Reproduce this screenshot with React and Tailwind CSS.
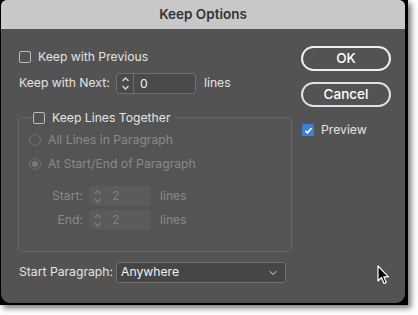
import { ChevronDown } from "lucide-react";

function Stepper({ value, disabled }) {
  return (
    <div
      className={
        disabled
          ? "flex h-[20px] w-[62px] rounded-[3px] bg-[#5b5b5b]"
          : "flex h-[21px] w-[80px] rounded-[3px] border border-[#6e6e6e] bg-[#4a4a4a]"
      }
    >
      <div
        className={
          "flex w-[17px] flex-col items-center justify-center " +
          (disabled ? "text-[#7e7e7e]" : "border-r border-[#6e6e6e] text-[#d8d8d8]")
        }
      >
        <svg width="9" height="15" viewBox="0 0 9 15" fill="none" stroke="currentColor" strokeWidth="1.3">
          <path d="M1.5 5 L4.5 2 L7.5 5" />
          <path d="M1.5 10 L4.5 13 L7.5 10" />
        </svg>
      </div>
      <span
        className={
          "pl-[6px] leading-[20px] " + (disabled ? "text-[#808080]" : "text-[#eeeeee]")
        }
      >
        {value}
      </span>
    </div>
  );
}

function Box({ checked }) {
  if (checked) {
    return (
      <span className="flex h-[12px] w-[12px] items-center justify-center rounded-[2px] bg-[#3b82d6]">
        <svg width="9" height="9" viewBox="0 0 9 9" fill="none" stroke="white" strokeWidth="1.6">
          <path d="M1.5 4.8 L3.6 6.8 L7.5 2" />
        </svg>
      </span>
    );
  }
  return <span className="h-[12px] w-[12px] rounded-[2px] border border-[#bdbdbd]" />;
}

function Radio({ selected }) {
  return (
    <span className="flex h-[12px] w-[12px] items-center justify-center rounded-full border border-[#747474]">
      {selected && <span className="h-[6px] w-[6px] rounded-full bg-[#7a7a7a]" />}
    </span>
  );
}

export default function App() {
  return (
    <div
      className="relative h-[315px] w-[418px] overflow-hidden whitespace-nowrap bg-white text-[12.2px]"
      style={{ fontFamily: "Inter, 'Noto Sans', sans-serif" }}
    >
      <div className="h-[305px] w-[408px] bg-black pb-[2px] pl-[1px] pr-[3px] shadow-[3px_3px_6px_rgba(0,0,0,0.55)]">
        <div className="flex h-full flex-col overflow-hidden rounded-b-[9px] rounded-t-[6px] bg-[#535353]">
          <div className="flex h-[29px] items-center justify-center bg-[#c8c8c8] text-[13.5px] font-semibold text-[#333333]">
            Keep Options
          </div>

          <div className="flex flex-1 pl-[17px] pr-[14px] pt-[17px]">
            <div className="flex w-[274px] flex-col text-[#e4e4e4]">
              <label className="flex h-[22px] items-center gap-[7px] pl-[1px]">
                <Box />
                Keep with Previous
              </label>

              <div className="mt-[5px] flex items-center">
                <span className="w-[98px] pl-[1px]">Keep with Next:</span>
                <Stepper value="0" />
                <span className="ml-[8px]">lines</span>
              </div>

              <div className="relative mt-[23px] h-[135px] rounded-[4px] border border-[#666666] bg-[#545454]">
                <label className="absolute left-[13px] top-[-8px] flex items-center gap-[7px] bg-[#535353] pl-[1px] pr-[4px] leading-[16px]">
                  <Box />
                  Keep Lines Together
                </label>

                <div className="flex flex-col pt-[14px] text-[#8a8a8a]">
                  <div className="flex h-[16px] items-center gap-[7px] pl-[10px]">
                    <Radio />
                    All Lines in Paragraph
                  </div>
                  <div className="mt-[8px] flex h-[16px] items-center gap-[7px] pl-[10px]">
                    <Radio selected />
                    At Start/End of Paragraph
                  </div>

                  <div className="mt-[14px] flex items-center">
                    <span className="w-[70px] pr-[6px] text-right">Start:</span>
                    <Stepper value="2" disabled />
                    <span className="ml-[9px]">lines</span>
                  </div>
                  <div className="mt-[4px] flex items-center">
                    <span className="w-[70px] pr-[6px] text-right">End:</span>
                    <Stepper value="2" disabled />
                    <span className="ml-[9px]">lines</span>
                  </div>
                </div>
              </div>

              <div className="mt-[10px] flex items-center">
                <span className="w-[98px] pl-[1px]">Start Paragraph:</span>
                <div className="flex h-[21px] w-[170px] items-center justify-between rounded-[3px] border border-[#707070] bg-[#464646] pl-[4px] pr-[6px] text-[#f2f2f2]">
                  Anywhere
                  <ChevronDown size={12} strokeWidth={2} className="text-[#dddddd]" />
                </div>
              </div>
            </div>

            <div className="ml-auto flex w-[90px] flex-col text-white">
              <button className="h-[25px] rounded-full border-2 border-[#efefef] text-[13.5px] font-medium">OK</button>
              <button className="mt-[11px] h-[25px] rounded-full border-2 border-[#e2e2e2] text-[13.5px] font-medium">
                Cancel
              </button>
              <label className="mt-[14px] flex items-center gap-[7px] pl-[1px] text-[#e4e4e4]">
                <Box checked />
                Preview
              </label>
            </div>
          </div>
        </div>
      </div>

      <svg className="absolute left-[377px] top-[265px]" width="14" height="21" viewBox="0 0 14 21">
        <path
          d="M1 1 L1 16 L4.5 12.5 L7 18.5 L9.3 17.5 L6.8 11.8 L11.5 11.8 Z"
          fill="black"
          stroke="white"
          strokeWidth="1.2"
          strokeLinejoin="round"
        />
      </svg>
    </div>
  );
}
